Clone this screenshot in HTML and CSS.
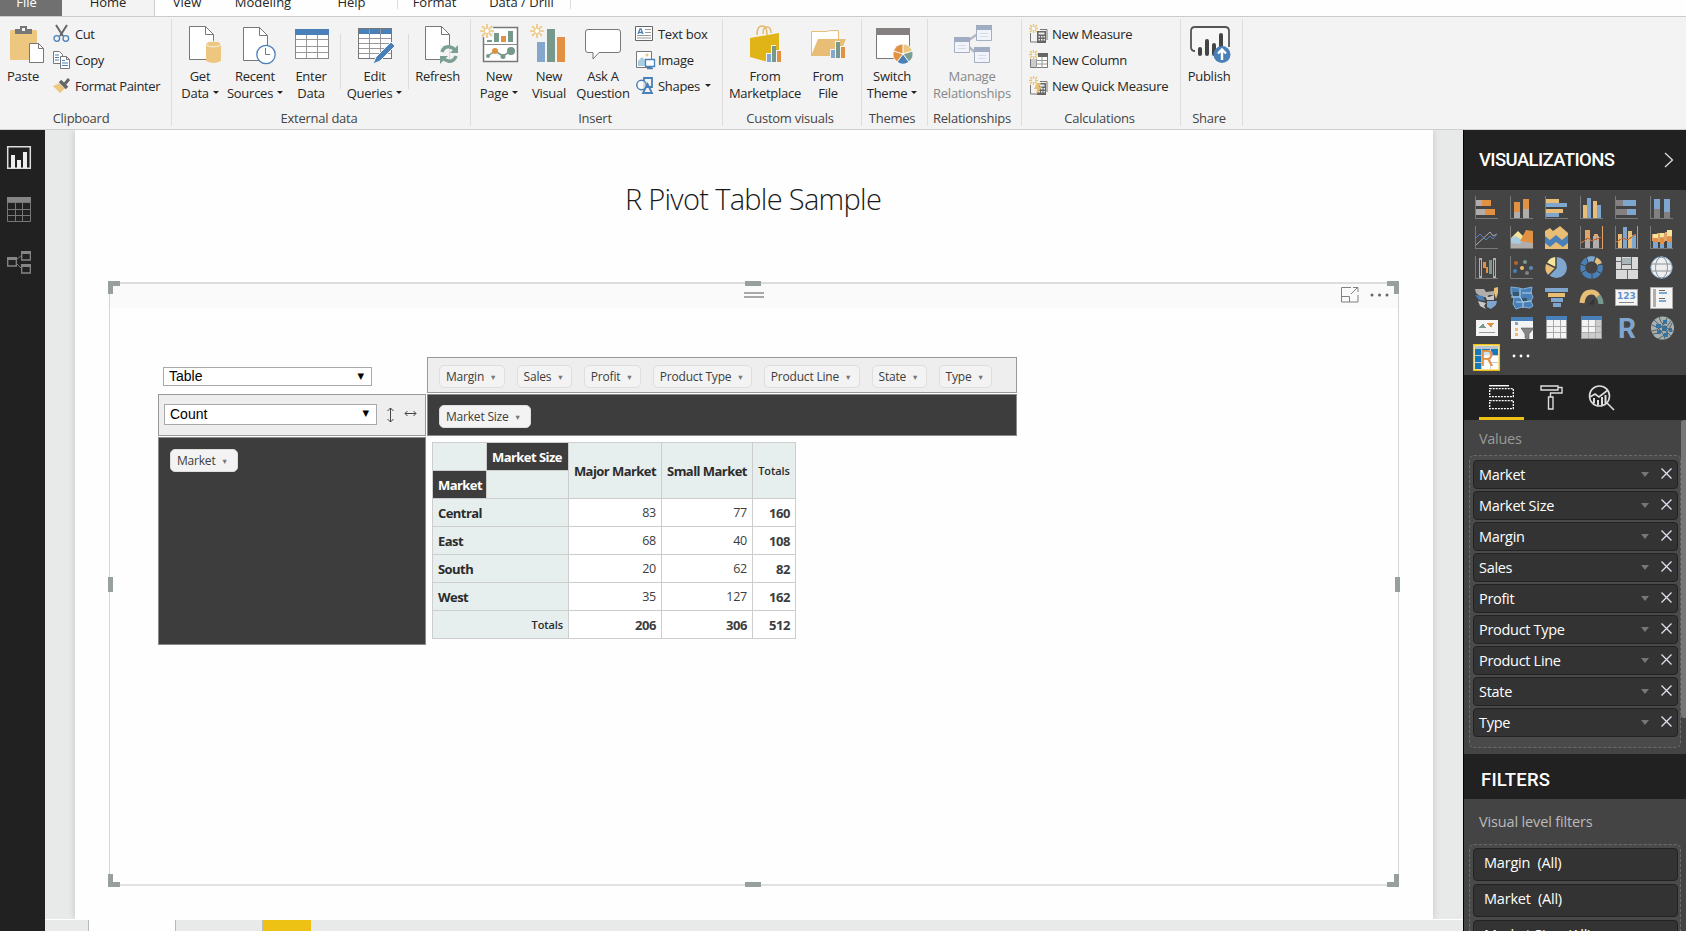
FILE: index.html
```html
<!DOCTYPE html>
<html lang="en">
<head>
<meta charset="utf-8">
<title>R Pivot Table Sample</title>
<link rel="stylesheet" href="styles.css">
</head>
<body>
<div class="app">
<nav class="tabs">
  <span class="tab tab-file">File</span><span class="tab tab-home">Home</span><span class="tab tab-view">View</span><span class="tab tab-modeling">Modeling</span><span class="tab tab-help">Help</span><i class="tab-sep"></i><span class="tab tab-format">Format</span><span class="tab tab-data">Data / Drill</span><i class="tab-sep"></i>
</nav>
<header class="ribbon">
  <section class="group g-clipboard">
    <div class="items">
      <div class="big b-paste"><svg width="40" height="40" viewBox="0 0 40 40"><rect x="7" y="5" width="27" height="30" rx="1" fill="#edc77f"/><path d="M12 9V4h5V1h7v3h5v5z" fill="#777"/><rect x="19" y="3" width="3" height="3" fill="#f3f3f3"/><path d="M26.500 18.500h9l5 5v14h-14z" fill="#fff" stroke="#777"/><path d="M35.500 18.500v5h5" fill="none" stroke="#777"/></svg><span>Paste</span></div>
      <div class="smalls">
        <div class="small"><svg width="18" height="18" viewBox="0 0 18 18"><path d="M3 0l7 11M14 0L7 11" stroke="#666" stroke-width="2" fill="none"/><circle cx="3.800" cy="13.500" r="2.800" fill="none" stroke="#4a80b8" stroke-width="1.300"/><circle cx="12.800" cy="13.500" r="2.800" fill="none" stroke="#4a80b8" stroke-width="1.300"/></svg>Cut</div>
        <div class="small"><svg width="18" height="18" viewBox="0 0 18 18"><path d="M.5.5h6l3 3v9h-9z" fill="#fff" stroke="#777"/><path d="M2 4h4M2 6.500h4M2 9h4" stroke="#4a80b8"/><path d="M7.500 5.500h6l3 3v9h-9z" fill="#fff" stroke="#777"/><path d="M13.500 5.500v3h3" fill="none" stroke="#777"/><path d="M9 9.500h3M9 12h6M9 14.500h6" stroke="#4a80b8"/></svg>Copy</div>
        <div class="small"><svg width="18" height="18" viewBox="0 0 18 18"><path d="M0 9l6-2.500 6 5L7 16z" fill="#edc77f"/><path d="M7 4l7 7" stroke="#666" stroke-width="3.500"/><path d="M11 8l5-6" stroke="#666" stroke-width="3"/></svg>Format Painter</div>
      </div>
    </div>
    <div class="label">Clipboard</div>
  </section>
  <section class="group g-external">
    <div class="items">
      <div class="big b-get"><svg width="40" height="40" viewBox="0 0 40 40"><path d="M9.500 1.500h16l8 8v25h-24z" fill="#fff" stroke="#777"/><path d="M25.500 1.500v8h8" fill="none" stroke="#777"/><path d="M26 19v17q7.500 4 15 0V19z" fill="#edc77f"/><ellipse cx="33.500" cy="19" rx="7.500" ry="2.800" fill="#edc77f" stroke="#f3f3f3"/></svg><span>Get</span><span>Data<b class="caret"></b></span></div>
      <div class="big b-recent"><svg width="40" height="40" viewBox="0 0 40 40"><path d="M8.500 2.500h16l8 8v25h-24z" fill="#fff" stroke="#777"/><path d="M24.500 2.500v8h8" fill="none" stroke="#777"/><circle cx="31" cy="29.500" r="9.200" fill="#fff" stroke="#4a80b8" stroke-width="1.300"/><path d="M30.500 23v6.500h4.500" fill="none" stroke="#777"/></svg><span>Recent</span><span>Sources<b class="caret"></b></span></div>
      <div class="big b-enter"><svg width="40" height="40" viewBox="0 0 40 40"><rect x="4.500" y="4.500" width="33" height="29" fill="#fff" stroke="#888"/><path d="M15.500 9v24M26.500 9v24M5 14.500h32M5 21.500h32M5 27.500h32" stroke="#999"/><rect x="4" y="4" width="34" height="6" fill="#4a80b8"/></svg><span>Enter</span><span>Data</span></div>
      <i class="item-sep"></i>
      <div class="big b-edit"><svg width="40" height="40" viewBox="0 0 40 40"><rect x="3.500" y="3.500" width="33" height="30" fill="#fff" stroke="#777"/><path d="M14.500 9v24M25.500 9v24M4 13.500h32M4 18.500h32M4 23.500h32M4 28.500h32" stroke="#999"/><rect x="4" y="4" width="32" height="5" fill="#4a80b8"/><path d="M14.500 4v5M25.500 4v5" stroke="#999"/><path d="M36 17l4 4-15 15-7 3 3-7z" fill="#4a80b8" stroke="#f3f3f3"/></svg><span>Edit</span><span>Queries<b class="caret"></b></span></div>
      <i class="item-sep"></i>
      <div class="big b-refresh"><svg width="40" height="40" viewBox="0 0 40 40"><path d="M7.500 1.500h16l8 8v25h-24z" fill="#fff" stroke="#777"/><path d="M23.500 1.500v8h8" fill="none" stroke="#777"/><path d="M22 20h20v20H22z" fill="#f3f3f3" opacity=".8"/><path d="M24 27q2-6 8-5 3 .500 5 3M38 31q-2 6-8 5-3-.500-5-3" fill="none" stroke="#7b9f92" stroke-width="3.500"/><path d="M40 20v8h-8zM22 39v-8h8z" fill="#7b9f92"/></svg><span>Refresh</span></div>
    </div>
    <div class="label">External data</div>
  </section>
  <section class="group g-insert">
    <div class="items">
      <div class="big b-page"><svg width="40" height="40" viewBox="0 0 40 40"><path d="M4.500 2.500h34v34h-34z" fill="#fff" stroke="#777" stroke-width="1.500"/><path d="M5 19.500h33" stroke="#888"/><path d="M15 8h5v9h-5zM29 6h5v11h-5z" fill="#76998c"/><path d="M22 11h5v6h-5z" fill="#e29142"/><path d="M8 15h5v2H8z" fill="#76998c"/><path d="M9 31l7-5 8 5 8-5" fill="none" stroke="#76998c" stroke-width="1.500"/><circle cx="9" cy="31" r="2" fill="#76998c"/><circle cx="16" cy="26" r="3" fill="#e29142"/><circle cx="24" cy="31.500" r="2.500" fill="#76998c"/><circle cx="32" cy="26" r="4" fill="#76998c"/><circle cx="8" cy="6" r="7" fill="#f3f3f3"/><path d="M8-1v4M8 9v4M1 6h4M11 6h4M3 1l3 3M10 8l3 3M13 1l-3 3M6 8l-3 3" stroke="#edc77f" stroke-width="1.700"/><circle cx="8" cy="6" r="2.500" fill="#fff" stroke="#edc77f"/></svg><span>New</span><span>Page<b class="caret"></b></span></div>
      <div class="big b-visual"><svg width="40" height="40" viewBox="0 0 40 40"><path d="M8 17h8v20H8z" fill="#86a7cd"/><path d="M18 4h8v33h-8z" fill="#76998c"/><path d="M28 12h8v25h-8z" fill="#e29142"/><path d="M8-1v4M8 9v4M1 6h4M11 6h4M3 1l3 3M10 8l3 3M13 1l-3 3M6 8l-3 3" stroke="#edc77f" stroke-width="1.700"/><circle cx="8" cy="6" r="2.500" fill="#fff" stroke="#edc77f"/></svg><span>New</span><span>Visual</span></div>
      <div class="big b-ask"><svg width="40" height="40" viewBox="0 0 40 40"><path d="M5 4.500h30q2.500 0 2.500 2.500v18q0 2.500-2.500 2.500H16l-6 6.500v-6.500H5q-2.500 0-2.500-2.500V7q0-2.500 2.500-2.500z" fill="#fff" stroke="#777"/></svg><span>Ask A</span><span>Question</span></div>
      <div class="smalls">
        <div class="small"><svg width="18" height="18" viewBox="0 0 18 18"><path d="M.5 1.500h17v14H.5z" fill="#fff" stroke="#666"/><path d="M3 9l2-5h1l2 5M3.500 7.500h4" stroke="#4a80b8" stroke-width="1.300" fill="none"/><path d="M10 4.500h6M10 7.500h6M2 10.500h14M2 13h14" stroke="#999"/></svg>Text box</div>
        <div class="small"><svg width="18" height="18" viewBox="0 0 18 18"><path d="M1.500.500h15v16h-15z" fill="#fff" stroke="#777"/><path d="M3 15V10l4-4 3 3v6z" fill="#a7cde2"/><circle cx="12" cy="4" r="1.500" fill="#edc77f"/><path d="M10.500 8.500h9v7h-9zM15 15v3M12 17.500h6" fill="#fff" stroke="#4a80b8" stroke-width="1.300"/></svg>Image</div>
        <div class="small"><svg width="18" height="18" viewBox="0 0 18 18"><path d="M9 1h8v9H9zM12.500 7l4.500 9h-9z" fill="none" stroke="#4a80b8" stroke-width="1.800"/><circle cx="6.500" cy="8" r="4.700" fill="#fff" fill-opacity=".7" stroke="#4a80b8" stroke-width="1.500"/></svg>Shapes<b class="caret"></b></div>
      </div>
    </div>
    <div class="label">Insert</div>
  </section>
  <section class="group g-custom">
    <div class="items">
      <div class="big b-market"><svg width="40" height="40" viewBox="0 0 40 40"><path d="M12 10q0-9 5-9t5 9M18 9q0-8 4-7 4 0 4 6" fill="none" stroke="#e2b86b" stroke-width="1.500"/><path d="M5 13l29-5v27l-11 2-18-5z" fill="#e0b416"/><path d="M21 28h5v-8h5v5h5v12H21z" fill="#f3f3f3"/><path d="M22 29h4v8h-4z" fill="#86a7cd"/><path d="M27 21h4v16h-4z" fill="#76998c"/><path d="M32 26h4v11h-4z" fill="#e29142"/></svg><span>From</span><span>Marketplace</span></div>
      <div class="big b-file"><svg width="40" height="40" viewBox="0 0 40 40"><path d="M3.500 30.500v-24h15l4-1h8v25z" fill="#fff" stroke="#e8bd75"/><path d="M10 14h28l-7 17H3z" fill="#e8bd75"/><path d="M22 24h5v-8h5v5h6v13H22z" fill="#f3f3f3"/><path d="M23 25h4v8h-4z" fill="#86a7cd"/><path d="M28 17h4v16h-4z" fill="#76998c"/><path d="M33 22h4v11h-4z" fill="#e29142"/></svg><span>From</span><span>File</span></div>
    </div>
    <div class="label">Custom visuals</div>
  </section>
  <section class="group g-themes">
    <div class="items">
      <div class="big b-theme"><svg width="40" height="40" viewBox="0 0 40 40"><path d="M4.500 4.500h33v29h-33z" fill="#fff" stroke="#777"/><path d="M4 3h34v7H4z" fill="#858080"/><circle cx="31" cy="29" r="10.500" fill="#f3f3f3"/><path d="M31 29V19.500a9.500 9.500 0 0 1 9 6.600z" fill="#edc77f"/><path d="M31 29l9-2.900a9.500 9.500 0 0 1-3.400 10.600z" fill="#7b9f92"/><path d="M31 29l5.600 7.700a9.500 9.500 0 0 1-11.200 0z" fill="#4a80b8"/><path d="M31 29l-5.600 7.700A9.500 9.500 0 0 1 22 26.100z" fill="#e29142"/><path d="M31 29l-9-2.900a9.500 9.500 0 0 1 9-6.600z" fill="#e29142"/><path d="M31 29v-10M31 29l9.500-3M31 29l6 8M31 29l-6 8M31 29l-9.500-3" stroke="#fff"/></svg><span>Switch</span><span>Theme<b class="caret"></b></span></div>
    </div>
    <div class="label">Themes</div>
  </section>
  <section class="group g-rel">
    <div class="items">
      <div class="big b-rel"><svg width="40" height="40" viewBox="0 0 40 40"><path d="M17 15l10-7M17 22l8 7" stroke="#b4bac4" stroke-width="2.500"/><g fill="#f1f4fa" stroke="#a5afc2"><path d="M2.500 13.500h15v14h-15zM24.500 1.500h15v14h-15zM22.500 23.500h15v14h-15z"/></g><path d="M2 12h16v5H2zM24 0h16v5H24zM22 22h16v5H22z" fill="#a0acc1"/><path d="M6 20.500h8M6 23.500h8M28 8.500h8M28 11.500h8M26 30.500h8M26 33.500h8" stroke="#d7dbe4"/></svg><span>Manage</span><span>Relationships</span></div>
    </div>
    <div class="label">Relationships</div>
  </section>
  <section class="group g-calc">
    <div class="items">
      <div class="smalls">
        <div class="small"><svg width="19" height="20" viewBox="0 0 19 20"><path d="M1.500 9v9h7M11 5.500h7V16" fill="none" stroke="#777"/><path d="M8 7h9v12H8z" fill="#666"/><path d="M9.500 8.500h6v2h-6zM9.500 12h1.500v1.500H9.500zM12 12h1.500v1.500H12zM14.500 12H16v1.500h-1.500zM9.500 15H11v1.500H9.500zM12 15h1.500v1.500H12zM14.500 15H16v1.500h-1.500z" fill="#eee"/><path d="M4.500 0v3M4.500 6v3M0 4.500h3M6 4.500h3M1 1l2 2M6 6l2 2M8 1L6 3M3 6L1 8" stroke="#e9c56d" stroke-width="1.300"/></svg>New Measure</div>
        <div class="small"><svg width="19" height="20" viewBox="0 0 19 20"><path d="M1.500 5.500h17v12h-17z" fill="#fff" stroke="#777"/><path d="M8 3h11v4H8z" fill="#666"/><path d="M2 8h5v9H2z" fill="#ccc"/><path d="M7.500 7v11M13 7v11M7 10.500h11M7 14h11" stroke="#999"/><path d="M0 0h9v9H0z" fill="#f3f3f3"/><path d="M4.500 0v3M4.500 6v3M0 4.500h3M6 4.500h3M1 1l2 2M6 6l2 2M8 1L6 3M3 6L1 8" stroke="#e9c56d" stroke-width="1.300"/></svg>New Column</div>
        <div class="small"><svg width="19" height="20" viewBox="0 0 19 20"><path d="M1.500 9v9h7M11 5.500h7V16" fill="none" stroke="#777"/><path d="M8 7h9v12H8z" fill="#666"/><path d="M10.500 8.500h5v2h-5zM12 12h1.500v1.500H12zM14.500 12H16v1.500h-1.500zM9.500 15H11v1.500H9.500zM12 15h1.500v1.500H12zM14.500 15H16v1.500h-1.500z" fill="#eee"/><path d="M8 7h4l-2 4h3l-6 8 1-6H5z" fill="#e8bd75"/><path d="M4.500 0v3M4.500 6v3M0 4.500h3M6 4.500h3M1 1l2 2M6 6l2 2M8 1L6 3M3 6L1 8" stroke="#e9c56d" stroke-width="1.300"/></svg>New Quick Measure</div>
      </div>
    </div>
    <div class="label">Calculations</div>
  </section>
  <section class="group g-share">
    <div class="items">
      <div class="big b-publish"><svg width="40" height="40" viewBox="0 0 40 40"><path d="M6 26q-4 0-4-4V6q0-4 4-4h30q4 0 4 4v16" fill="#f7f7f7" stroke="#555" stroke-width="1.800"/><path d="M11 24v5M18 16v13M25 20v9M32 10v14" stroke="#444" stroke-width="4" stroke-linecap="round"/><circle cx="33" cy="29.500" r="8.500" fill="#4a80b8"/><path d="M33 35v-10M29 28.500l4-4 4 4" stroke="#fff" stroke-width="2.400" fill="none"/></svg><span>Publish</span></div>
    </div>
    <div class="label">Share</div>
  </section>
</header>

<main class="main">
  <aside class="rail">
    <svg width="24" height="24" viewBox="0 0 24 24"><path d="M.7.700h22.600v21.600H.7z" fill="none" stroke="#ddd" stroke-width="1.500"/><path d="M4 9h4v13H4zM10 14h4v8h-4zM16 6h4v16h-4z" fill="#eee"/></svg>
    <svg width="24" height="25" viewBox="0 0 24 25"><path d="M0 0h24v6H0z" fill="#858585"/><path d="M.5 5.500h23v19H.5zM8.500 6v18M15.500 6v18M0 12.500h24M0 18.500h24" fill="none" stroke="#777"/></svg>
    <svg class="rail-model" width="24" height="24" viewBox="0 0 24 24"><path d="M9 9l6-5M9 12l6 6" stroke="#777"/><path d="M.7 7h8.600v8H.7zM14.700 1h8.600v8h-8.600zM14.700 14h8.600v8h-8.600z" fill="none" stroke="#858585" stroke-width="1.300"/><path d="M0 6h10v3H0zM14 0h10v3H14zM14 13h10v3H14z" fill="#858585"/></svg>
  </aside>

  <div class="workspace">
    <div class="desk">
      <article class="page">
        <h1 class="title">R Pivot Table Sample</h1>
        <div class="visual">
          <div class="visual-bar">
            <svg class="grip" width="20" height="6" viewBox="0 0 20 6"><path d="M0 1h20M0 5h20" stroke="#8d8d88" stroke-width="1.400"/></svg>
            <svg class="focus" width="18" height="16" viewBox="0 0 18 16"><path d="M10 .500H.5v14.500h16.500V8M.5 9.500h8V15M10 7l6.500-6.500M12 .500h5v4.500" fill="none" stroke="#7c8280"/></svg>
            <svg class="dots" width="20" height="4" viewBox="0 0 20 4"><circle cx="2" cy="2" r="1.500" fill="#666"/><circle cx="9.500" cy="2" r="1.500" fill="#666"/><circle cx="17" cy="2" r="1.500" fill="#666"/></svg>
          </div>
          <i class="corner tl"></i><i class="corner tr"></i><i class="corner bl"></i><i class="corner br"></i>
          <i class="edge et"></i><i class="edge eb"></i><i class="edge el"></i><i class="edge er"></i>

          <div class="pivot">
            <div class="cell renderer"><div class="select sel-table">Table<b>▼</b></div></div>
            <div class="cell unused"><span class="pill">Margin<b>▾</b></span><span class="pill">Sales<b>▾</b></span><span class="pill">Profit<b>▾</b></span><span class="pill">Product Type<b>▾</b></span><span class="pill">Product Line<b>▾</b></span><span class="pill">State<b>▾</b></span><span class="pill">Type<b>▾</b></span></div>
            <div class="cell vals"><div class="select sel-count">Count<b>▼</b></div>
              <svg width="9" height="16" viewBox="0 0 9 16"><path d="M4.500 1v14M1.500 4l3-3 3 3M1.500 12l3 3 3-3" fill="none" stroke="#444"/></svg>
              <svg width="13" height="7" viewBox="0 0 13 7"><path d="M1 3.500h11M3.500 1L1 3.500 3.500 6M9.500 1L12 3.500 9.500 6" fill="none" stroke="#444"/></svg></div>
            <div class="cell dark cols"><span class="pill">Market Size<b>▾</b></span></div>
            <div class="cell dark rows"><span class="pill">Market<b>▾</b></span></div>
            <div class="result">
              <table class="grid">
                <colgroup><col class="c1"><col class="c2"><col class="c3"><col class="c4"><col class="c5"></colgroup>
                <tr><th></th><th class="axis">Market Size</th><th rowspan="2" class="mid">Major Market</th><th rowspan="2" class="mid">Small Market</th><th rowspan="2" class="tot mid">Totals</th></tr>
                <tr><th class="axis">Market</th><th></th></tr>
                <tr><th colspan="2">Central</th><td>83</td><td>77</td><td class="sum">160</td></tr>
                <tr><th colspan="2">East</th><td>68</td><td>40</td><td class="sum">108</td></tr>
                <tr><th colspan="2">South</th><td>20</td><td>62</td><td class="sum">82</td></tr>
                <tr><th colspan="2">West</th><td>35</td><td>127</td><td class="sum">162</td></tr>
                <tr><th colspan="2" class="tot right">Totals</th><td class="sum">206</td><td class="sum">306</td><td class="sum">512</td></tr>
              </table>
            </div>
          </div>
        </div>
      </article>
    </div>
    <footer class="pages"><i class="pg active"></i><i class="pg"></i><i class="pg add"></i></footer>
  </div>

  <aside class="panel">
    <div class="panel-head">VISUALIZATIONS<svg width="10" height="16" viewBox="0 0 10 16"><path d="M1 1l7.500 7L1 15" fill="none" stroke="#ddd" stroke-width="1.300"/></svg></div>
    <div class="gallery">
      <svg viewBox="0 0 24 24"><path class="ax" d="M.5 0v22.500H23"/><path fill="#b0adaa" d="M1 4h6v6H1zM1 13h9v6H1z"/><path fill="#e29142" d="M7 4h9v6H7zM10 13h10v6H10z"/></svg>
      <svg viewBox="0 0 24 24"><path class="ax" d="M.5 0v22.500H23"/><path fill="#b0adaa" d="M4 16h6v6H4zM13 13h6v9h-6z"/><path fill="#e29142" d="M4 6h6v10H4zM13 3h6v10h-6z"/></svg>
      <svg viewBox="0 0 24 24"><path class="ax" d="M.5 0v22.500H23"/><path fill="#e8bd75" d="M1 3h13v4H1zM1 13h17v4H1z"/><path fill="#7fa6cf" d="M1 7h21v4H1zM1 17h13v4H1z"/></svg>
      <svg viewBox="0 0 24 24"><path class="ax" d="M.5 0v22.500H23"/><path fill="#e8bd75" d="M3 9h4v13H3zM13 5h4v17h-4z"/><path fill="#7fa6cf" d="M7 2h4v20H7zM17 9h4v13h-4z"/></svg>
      <svg viewBox="0 0 24 24"><path class="ax" d="M.5 0v22.500H23"/><path fill="#858080" d="M1 4h7v6H1zM1 13h11v6H1z"/><path fill="#7fa6cf" d="M8 4h13v6H8zM12 13h9v6h-9z"/></svg>
      <svg viewBox="0 0 24 24"><path class="ax" d="M.5 0v22.500H23"/><path fill="#858080" d="M4 13h6v9H4zM14 16h6v6h-6z"/><path fill="#7fa6cf" d="M4 3h6v10H4zM14 3h6v13h-6z"/></svg>

      <svg viewBox="0 0 24 24"><path class="ax" d="M.5 0v22.500H23"/><g fill="none" shape-rendering="auto"><path stroke="#b0adaa" d="M1 19L15 6l3 4 4-2"/><path stroke="#5b7fc0" d="M1 12l4-4 6 6 4-4 3 3 4-5"/></g></svg>
      <svg viewBox="0 0 24 24" shape-rendering="auto"><path fill="#b0adaa" d="M0 15h23v7H0z"/><path fill="#f8e59a" d="M1 12l7-7 6 6-5 5z"/><path fill="#a7cde2" d="M1 12l5-2 7 5-4 3-8-1z"/><path fill="#e29142" d="M10 15l6-11 7 1v12z"/><path class="ax" d="M.5 0v22.500H23"/></svg>
      <svg viewBox="0 0 24 24" shape-rendering="auto"><path fill="#e8bd75" d="M0 5l5-3 3 3 7-5 8 7v16H0z"/><path fill="#4a80b8" d="M0 10l5 4 6-5 6 5 6-5v8l-5 4-7-5-6 5-5-4z"/></svg>
      <svg viewBox="0 0 24 24"><path class="ax" d="M.5 0v22.500H23"/><path fill="#b0adaa" d="M5 8h5v14H5zM13 10h6v12h-6z"/><path fill="#e2a567" d="M5 4h5v9H5zM14 8h4v3h-4zM22 0h1v23h-1z"/><path fill="none" stroke="#c46a30" d="M1 17l7-5 4 3 9-4"/></svg>
      <svg viewBox="0 0 24 24"><path class="ax" d="M.5 0v22.500H23"/><path fill="#7fa6cf" d="M8 1h4v21H8zM17 9h4v13h-4z"/><path fill="#e8bd75" d="M3 8h4v14H3zM13 5h4v17h-4z"/><path fill="#e29142" d="M22 0h1v23h-1z"/><path fill="none" stroke="#c46a30" d="M1 16l7-4 5 2 8-6"/></svg>
      <svg viewBox="0 0 24 24"><path class="ax" d="M.5 0v22.500H23"/><path fill="#e2a567" d="M2 8l10-1 10-2v9l-10 2-10-1z"/><path fill="#f8e59a" d="M3 8h5v4H3zM10 7h4v4h-4zM17 4h5v6h-5z"/><path fill="#e29142" d="M3 12h5v4H3zM10 12h4v6h-4zM17 11h5v5h-5z"/><path fill="#7fa6cf" d="M3 16h5v6H3zM10 18h4v4h-4zM17 16h5v6h-5z"/></svg>

      <svg viewBox="0 0 24 24"><path class="ax" d="M.5 0v22.500H23"/><path fill="#b0adaa" d="M4 2h3v20H4zM18 2h3v20h-3z"/><path fill="#444" d="M5 4h1v16H5zM19 4h1v16h-1z"/><path fill="#e29142" d="M8 6h3v6H8zM11 11h2v6h-2z"/><path fill="#76998c" d="M14 4h3v14h-3z"/></svg>
      <svg viewBox="0 0 24 24" shape-rendering="auto"><path class="ax" d="M.5 0v22.500H23"/><circle cx="6" cy="7" r="2" fill="#b8622f"/><circle cx="15" cy="6" r="2" fill="#76998c"/><circle cx="12" cy="12" r="2" fill="#e8bd75"/><circle cx="5" cy="15" r="2" fill="#4a80b8"/><circle cx="21" cy="12" r="2" fill="#5d88bd"/><circle cx="17" cy="17" r="2" fill="#858080"/></svg>
      <svg viewBox="0 0 24 24" shape-rendering="auto"><circle cx="11.500" cy="11.500" r="10.500" fill="#7fa6cf"/><path fill="#e8bd75" d="M11 12L3 19Q-1 14 1 8z"/><path fill="#f8e59a" d="M11 12L2 7Q5 1 11 1z"/><path stroke="#444" stroke-width="1.500" d="M11 12L3 20M11 12L1 7M11 12V0"/></svg>
      <svg viewBox="0 0 24 24" shape-rendering="auto"><circle cx="11.500" cy="11.500" r="8.700" fill="none" stroke="#4a80b8" stroke-width="5"/><path d="M14.500 3.200A8.700 8.700 0 0 0 7 4" fill="none" stroke="#7fa6cf" stroke-width="5"/><path d="M15.500 3.800a8.700 8.700 0 0 1 4 4" fill="none" stroke="#e8bd75" stroke-width="5"/><path d="M16 0l-2 6M24 8l-6 1M22 18l-5-3M12 24v-6M1 17l5-3M0 8l6 2M6 0l2 6" stroke="#444"/></svg>
      <svg viewBox="0 0 24 24"><path fill="#d9d9d9" d="M1 1h22v22H1z"/><path fill="#a9b5b8" d="M7 2h9v7H7z"/><path d="M6.500 1v12M16.500 1v12M1 13.500h22M12.500 14v9M6 8.500h10M1 5.500h5" stroke="#666"/></svg>
      <svg viewBox="0 0 24 24" shape-rendering="auto"><circle cx="11.500" cy="11.500" r="10.700" fill="#eee" stroke="#7fa6cf"/><ellipse cx="11.500" cy="11.500" rx="6" ry="10.500" fill="none" stroke="#89929a"/><path d="M1 8h21M1 15h21" stroke="#89929a" fill="none"/></svg>

      <svg viewBox="0 0 24 24" shape-rendering="auto"><path fill="#b0adaa" d="M0 3h9l2 3 8-1v4h-5l-2 2H6L1 7z"/><path fill="#4a80b8" d="M0 9l8 1 2 5-6-1z"/><path fill="#c9c9c9" d="M3 15l8 2-2 3 2 3-6-3zM10 10l4 1 5-2v5h-7z"/><path fill="#7fa6cf" d="M12 15h10l-1 4-5 4-4-2z"/><path fill="#e8bd75" d="M19 2l4-1v6l-2 6-2-6z"/></svg>
      <svg viewBox="0 0 24 24" shape-rendering="auto"><path fill="#4a80b8" stroke="#7fb0d9" d="M1 1l8 1 4 1 9-2-1 6 2 4-2 4 2 5-3 2-8-1-6 2-3-5 1-5-3-6z"/><path fill="#38576b" d="M3 6h6v4H3zM12 12h5v4h-5z"/><path fill="none" stroke="#b5d5ea" d="M1 11h9V3M10 11l3 5 8-1M12 7h10M6 16h7v6"/></svg>
      <svg viewBox="0 0 24 24"><path fill="#7fa6cf" d="M0 2h23v4H0zM6 12h12v4H6zM8 17h8v4H8z"/><path fill="#e8bd75" d="M3 7h17v4H3z"/></svg>
      <svg viewBox="0 0 24 24" shape-rendering="auto"><path d="M2 17Q3 6 11.500 6q5 0 7 5" fill="none" stroke="#e8bd75" stroke-width="5"/><path d="M18 10q3 3 3 8" fill="none" stroke="#76998c" stroke-width="5"/><path d="M9 18l6-6-2 7z" fill="#333"/></svg>
      <svg viewBox="0 0 24 24"><path fill="#f4f4f4" stroke="#aaa" d="M.5 3.500h22v16H.5z"/><text x="2" y="13" class="num">123</text><path stroke="#888" d="M4 16.500h15"/></svg>
      <svg viewBox="0 0 24 24"><path fill="#f4f4f4" stroke="#aaa" d="M.5 1.500h22v21H.5z"/><path fill="#b0adaa" d="M3 3h3v18H3z"/><path stroke="#666" d="M9 4.500h6M9 12.500h6"/><path stroke="#7fa6cf" stroke-width="2" d="M9 7h8M9 15h7"/></svg>

      <svg viewBox="0 0 24 24"><path fill="#f4f4f4" d="M1 4h22v16H1z"/><path fill="#76998c" d="M4 12l4-5 3 5z"/><path fill="#e29142" d="M12 7h7l-3 5z"/><path stroke="#999" d="M4 16.500h16"/></svg>
      <svg viewBox="0 0 24 24" shape-rendering="auto"><path fill="#f4f4f4" d="M1 1h22v22H1z"/><path fill="#4a80b8" d="M1 1h22v4H1z"/><path fill="#7fa6cf" d="M5 6h3v3H5z"/><path fill="#e8bd75" d="M5 12h3v3H5zM5 17h3v3H5z"/><path fill="#858585" stroke="#444" stroke-width=".5" d="M11 12h13l-5 6v6l-4-2v-4z"/></svg>
      <svg viewBox="0 0 24 24"><path fill="#f4f4f4" stroke="#999" d="M1.500.500h20v22h-20z"/><path stroke="#aaa" d="M8.500 4v18M15.500 4v18M2 10.500h19M2 16.500h19"/><path fill="#4a80b8" d="M1 0h21v4H1z"/></svg>
      <svg viewBox="0 0 24 24"><path fill="#f4f4f4" stroke="#999" d="M1.500.500h20v22h-20z"/><path fill="#ccc" d="M15 4h6v18h-6zM2 17h19v5H2z"/><path stroke="#aaa" d="M8.500 4v18M15.500 4v18M2 10.500h19M2 16.500h19"/><path fill="#4a80b8" d="M1 0h21v4H1z"/></svg>
      <svg viewBox="0 0 24 24"><text x="3" y="22" class="rr">R</text></svg>
      <svg viewBox="0 0 24 24" shape-rendering="auto"><circle cx="12.500" cy="12" r="11.500" fill="#a9b0b1"/><path fill="#2a7ab8" d="M6 8h5v4H6zM12 10h5v5h-5zM7 14h4v4H7zM14 17h4v4h-4zM13 4h4v4h-4zM19 12h3v4h-3z"/><path d="M4 4q9 8 17 16M2 9q10 3 13 14M9 1q3 10 14 14M2 15Q12 14 17 2M8 23Q18 18 22 7M3 18q10 0 18-13" fill="none" stroke="#59625f"/></svg>

      <svg class="picked" viewBox="0 0 27 27" shape-rendering="auto"><path fill="#fff" stroke="#edc215" stroke-width="1.500" d="M.7.700h25.600v25.600H.7z"/><path fill="#b9c3c9" d="M2 2h23v3H2z"/><path fill="#1279bd" d="M2 5h6v6H2zM2 12h6v6H2zM2 19h6v6H2zM9 5h8v6H9zM18 5h7v6h-7z"/><path stroke="#ccc" d="M8.500 5v20M17.500 5v20M2 11.500h23M2 18.500h23"/><path fill="#fff" d="M9 6h8v14H9z" opacity=".8"/><text x="7" y="22" class="rp">R</text></svg>
      <svg viewBox="0 0 24 24" shape-rendering="auto"><circle cx="4" cy="10" r="1.400" fill="#fff"/><circle cx="11" cy="10" r="1.400" fill="#fff"/><circle cx="18" cy="10" r="1.400" fill="#fff"/></svg>
    </div>
    <div class="modes">
      <span class="mode on"><svg width="25" height="25" viewBox="0 0 25 25"><path d="M0 .700h20" stroke="#fff" stroke-width="1.400"/><path d="M.7 3.700h23.600v8H.7zM.7 15.700h23.600v8H.7z" fill="none" stroke="#fff" stroke-width="1.300" stroke-dasharray="2 1"/></svg></span>
      <span class="mode"><svg width="25" height="25" viewBox="0 0 25 25"><path d="M2 1h17v4H2zM19 2.500h4V8H11.500v4M9.500 12h4.500v12H9.500z" fill="none" stroke="#ddd" stroke-width="1.400"/></svg></span>
      <span class="mode"><svg width="26" height="26" viewBox="0 0 26 26"><circle cx="10.500" cy="11" r="10" fill="none" stroke="#ddd" stroke-width="1.600"/><path d="M18 18l7 7M1 12l5-3 4 3 9-7" stroke="#ddd" stroke-width="1.600" fill="none"/><path d="M5 13v5M9 15v5M13 12v8M16.500 10v8" stroke="#ddd" stroke-width="2"/></svg></span>
    </div>
    <div class="wells">
      <div class="wells-label">Values</div>
      <div class="drop">
        <div class="field">Market<i></i><svg viewBox="0 0 11 11"><path d="M.5.500l10 10M10.500.500l-10 10"/></svg></div>
        <div class="field">Market Size<i></i><svg viewBox="0 0 11 11"><path d="M.5.500l10 10M10.500.500l-10 10"/></svg></div>
        <div class="field">Margin<i></i><svg viewBox="0 0 11 11"><path d="M.5.500l10 10M10.500.500l-10 10"/></svg></div>
        <div class="field">Sales<i></i><svg viewBox="0 0 11 11"><path d="M.5.500l10 10M10.500.500l-10 10"/></svg></div>
        <div class="field">Profit<i></i><svg viewBox="0 0 11 11"><path d="M.5.500l10 10M10.500.500l-10 10"/></svg></div>
        <div class="field">Product Type<i></i><svg viewBox="0 0 11 11"><path d="M.5.500l10 10M10.500.500l-10 10"/></svg></div>
        <div class="field">Product Line<i></i><svg viewBox="0 0 11 11"><path d="M.5.500l10 10M10.500.500l-10 10"/></svg></div>
        <div class="field">State<i></i><svg viewBox="0 0 11 11"><path d="M.5.500l10 10M10.500.500l-10 10"/></svg></div>
        <div class="field">Type<i></i><svg viewBox="0 0 11 11"><path d="M.5.500l10 10M10.500.500l-10 10"/></svg></div>
      </div>
      <i class="thumb"></i>
    </div>
    <div class="filters-head">FILTERS</div>
    <div class="filters">
      <div class="filters-label">Visual level filters</div>
      <div class="drop">
        <div class="filter">Margin&nbsp; (All)</div>
        <div class="filter">Market&nbsp; (All)</div>
        <div class="filter">Market Size&nbsp; (All)</div>
      </div>
    </div>
  </aside>
</main>
</div>
</body>
</html>
```
FILE: styles.css
```css
* { box-sizing: border-box; }
body { margin: 0; font-family: "Open Sans", "Noto Sans", sans-serif; font-size: 13px; color: #262626; }
svg { display: block; flex: none; overflow: visible; }
.app { width: 1686px; height: 931px; overflow: hidden; display: flex; flex-direction: column; background: #fff; }

/* ribbon tabs */
.tabs { height: 17px; flex: none; display: flex; overflow: hidden; border-bottom: 1px solid #ccc; background: #fefefe; }
.tab { line-height: 18px; margin-top: -7px; height: 24px; text-align: center; white-space: nowrap; }
.tab-file { width: 62px; padding-right: 9px; background: #707070; color: #fff; }
.tab-home { width: 93px; height: 25px; background: #f3f3f3; border-right: 1px solid #ccc; }
.tab-view { width: 64px; }
.tab-modeling { width: 88px; }
.tab-help { width: 90px; padding-right: 1px; }
.tab-format { width: 73px; }
.tab-data { width: 99px; padding-left: 2px; }
.tab-sep { width: 1px; height: 9px; background: #ddd; }

/* ribbon */
.ribbon { height: 113px; flex: none; display: flex; background: #f3f3f3; border-bottom: 1px solid #cfcfcf; letter-spacing: -0.25px; }
.group { margin: 2px 0 3px; border-right: 1px solid #dedede; display: flex; flex-direction: column; justify-content: space-between; }
.items { display: flex; height: 86px; padding-top: 6px; }
.label { height: 18px; line-height: 18px; margin-bottom: -1px; text-align: center; color: #444; white-space: nowrap; letter-spacing: -0.25px; }
.g-clipboard { width: 172px; padding-right: 9px; }
.g-external { width: 299px; padding-right: 4px; }
.g-insert { width: 252px; padding-right: 3px; }
.g-custom { width: 139px; padding-right: 4px; }
.g-themes { width: 66px; padding-right: 5px; }
.g-rel { width: 94px; padding-right: 5px; }
.g-calc { width: 159px; padding-right: 3px; }
.g-share { width: 62px; padding-right: 5px; }
.big { display: flex; flex-direction: column; align-items: center; flex: none; line-height: 17px; white-space: nowrap; }
.big svg { margin-bottom: 3px; }
.b-paste { width: 46px; }
.b-get { width: 56px; }
.b-recent { width: 54px; }
.b-enter { width: 58px; }
.b-edit { width: 67px; }
.b-refresh { width: 57px; }
.b-page { width: 56px; }
.b-visual { width: 44px; }
.b-ask { width: 64px; }
.b-market { width: 84px; }
.b-file { width: 42px; }
.b-theme { width: 60px; }
.b-rel { width: 88px; color: #888; }
.b-publish { width: 56px; }
.item-sep { width: 1px; height: 55px; margin-top: 9px; background: #dcdcdc; }
.smalls { display: flex; flex-direction: column; margin-top: -4px; }
.small { display: flex; align-items: center; gap: 4px; height: 26px; white-space: nowrap; letter-spacing: -0.3px; }
.g-clipboard .small { letter-spacing: -0.4px; }
.g-insert .small { gap: 5px; }
.g-clipboard .smalls { padding-left: 7px; }
.g-calc .smalls { padding-left: 7px; }
.caret { display: inline-block; border: 3.500px solid transparent; border-top-color: #222; border-bottom: 0; margin-left: 4px; vertical-align: 4px; }
.small .caret { margin: -2px 0 0 0; }

/* work area */
.main { flex: 1; display: flex; min-height: 0; }
.rail { width: 45px; background: #212121; padding: 16px 0 0 7px; display: flex; flex-direction: column; gap: 27px; }
.rail-model { margin-top: 2px; }
.workspace { width: 1418px; display: flex; flex-direction: column; background: #e8eaea; }
.desk { height: 789px; padding: 0 30px; }
.page { height: 789px; background: #fefefe; box-shadow: 0 0 7px rgba(0,0,0,.16); clip-path: inset(0 -9px 0 -9px); padding: 0 34px; }
.title { margin: 0; height: 152px; padding: 49px 2px 0 0; line-height: 40px; font-size: 29px; font-weight: 300; letter-spacing: -0.7px; text-align: center; color: #1a1a1a; }
.pages { height: 12px; border-top: 1px solid #fff; padding-left: 43px; display: flex; }
.pg { width: 87px; border-left: 1px solid #bbb; }
.active { background: #fefefe; }
.add { width: 49px; background: #edc215; }

.visual { position: relative; height: 604px; border: 1px solid #d5d5d5; border-top: 2px solid #ddd; border-bottom: 2px solid #e2e2e2; }
.visual-bar { height: 24px; background: #fafafa; display: flex; align-items: flex-start; padding-right: 11px; }
.grip { margin: 8px 577px 0 634px; }
.focus { margin: 3px 11px 0 0; }
.dots { margin-top: 9px; }
.corner { position: absolute; width: 12px; height: 13px; border: 0 solid #97a09d; }
.tl { left: -2px; top: -3px; border-width: 5px 0 0 5px; }
.tr { right: -1px; top: -3px; border-width: 5px 5px 0 0; }
.bl { left: -2px; bottom: -3px; border-width: 0 0 5px 5px; }
.br { right: -1px; bottom: -3px; border-width: 0 5px 5px 0; }
.edge { position: absolute; background: #97a09d; }
.et, .eb { width: 16px; height: 5px; left: 635px; }
.et { top: -3px; }
.eb { bottom: -3px; }
.el, .er { width: 5px; height: 15px; top: 293px; }
.el { left: -2px; }
.er { right: -2px; }

/* pivot */
.pivot { display: grid; grid-template-columns: 268px 590px; grid-template-rows: 36px 42px 208px; gap: 1px; padding: 49px 0 0 48px; color: #3d3d3d; letter-spacing: -0.25px; }
.cell { border: 1px solid #999; background: #eee; display: flex; }
.renderer { border: 0; background: none; padding: 10px 0 0 5px; }
.select { height: 19px; border: 1px solid #a9a9a9; background: #fff; color: #000; font: 14px/17px "Liberation Sans", Arial, sans-serif; padding: 0 7px 0 5px; display: flex; justify-content: space-between; letter-spacing: 0; }
.select b { font: 8.500px/17px "DejaVu Sans", sans-serif; }
.sel-table { width: 209px; }
.sel-count { width: 213px; height: 21px; line-height: 18px; }
.unused { padding: 7px 0 0 11px; gap: 11.500px; }
.vals { padding: 0 0 1px 5px; align-items: center; gap: 9px; }
.vals svg:last-child { margin-bottom: 3px; }
.dark { background: #3d3d3d; border-color: #8a8a8a; }
.cols { padding: 10px 0 0 11px; }
.rows { padding: 11px 0 0 11px; }
.pill { height: 23px; line-height: 21px; padding: 0 7px 0 6px; border: 1px solid #dedede; border-radius: 5px; background: #f3f3f3; font-size: 12px; letter-spacing: -0.2px; white-space: nowrap; }
.pill b { display: inline-block; width: 6px; font: 8.500px/12px "DejaVu Sans", sans-serif; margin-left: 7px; vertical-align: 1px; color: #777; }
.rows .pill, .cols .pill { padding-right: 8px; }
.result { padding: 5px 0 0 5px; }
.grid { width: 363px; table-layout: fixed; border-collapse: collapse; font-size: 12.500px; }
.c1 { width: 54px; }
.c2 { width: 82px; }
.c3 { width: 93px; }
.c4 { width: 91px; }
.c5 { width: 43px; }
.grid tr { height: 28px; }
.grid th, .grid td { border: 1px solid #cdcdcd; padding: 1px 5px 0; text-align: right; background: #fff; white-space: nowrap; line-height: 18px; }
.grid th { background: #e6eeee; text-align: left; font-size: 13px; font-weight: 700; color: #2c2c2c; letter-spacing: -0.55px; }
.grid .axis { background: #3d3d3d; color: #fff; }
.grid th.mid { text-align: center; padding: 1px 0 0; }
.grid .tot { font-size: 11px; font-weight: 600; letter-spacing: -0.1px; }
.grid th.right { text-align: right; }
.grid .sum { font-size: 13px; font-weight: 700; letter-spacing: -0.4px; }

/* right panel */
.panel { width: 223px; border-left: 1px solid #000; background: #444; color: #fff; display: flex; flex-direction: column; font-size: 14.500px; letter-spacing: -0.3px; }
.panel-head, .filters-head { background: #212121; font: 500 18.500px "Roboto", sans-serif; flex: none; display: flex; align-items: center; justify-content: space-between; }
.panel-head { height: 60px; padding: 0 12px 0 15px; letter-spacing: -0.6px; }
.filters-head { height: 45px; padding: 6px 0 0 17px; letter-spacing: 0.2px; }
.gallery { height: 185px; flex: none; display: grid; grid-template-columns: repeat(6, 35px); grid-auto-rows: 30px; padding: 6px 0 0 11px; }
.gallery svg { width: 24px; height: 24px; }
.gallery .picked { width: 27px; height: 27px; margin: -2px 0 0 -2px; }
.ax { fill: none; stroke: #77797a; }
.gallery svg:not([shape-rendering]) { shape-rendering: crispEdges; }
.num { font: 700 9px "DejaVu Sans", sans-serif; fill: #5f92c9; letter-spacing: 0; }
.rr { font: 700 28px "Roboto", sans-serif; fill: #7fa6cf; }
.rp { font: 22px "Roboto", sans-serif; fill: #e29142; }
.modes { height: 45px; flex: none; background: #212121; display: flex; padding-left: 15px; gap: 5px; }
.mode { width: 45px; display: flex; justify-content: center; padding-top: 10px; }
.on { border-bottom: 3px solid #edc215; }
.wells { position: relative; height: 334px; flex: none; padding: 7px 5px 0; }
.wells-label { height: 28px; line-height: 23px; padding-left: 10px; color: #999; }
.drop { border: 1px dashed #6a6a6a; border-radius: 5px; background: #4a4a4a; padding: 4px 2px 10px 3px; display: flex; flex-direction: column; gap: 2px; }
.field { height: 29px; border: 1px solid #222; border-radius: 4px; background: #333; padding: 0 5px; display: flex; align-items: center; }
.field i { margin-left: auto; margin-bottom: 1px; border: 4.500px solid transparent; border-top: 5px solid #777; border-bottom: 0; }
.field svg { width: 11px; height: 11px; margin-left: 12px; margin-bottom: 3px; fill: none; stroke: #e0e0ee; stroke-width: 1.300; }
.thumb { position: absolute; right: 0; top: 0; width: 5px; height: 298px; background: #777; border-radius: 3px 0 0 3px; }
.filters { padding: 10px 5px 0; overflow: hidden; }
.filters-label { height: 35px; line-height: 26px; padding-left: 10px; color: #bbb; letter-spacing: -0.15px; }
.filters .drop { gap: 3px; padding-top: 3px; }
.filter { height: 33px; line-height: 27px; border: 1px solid #222; border-radius: 4px; background: #333; padding-left: 10px; letter-spacing: -0.2px; }
```
